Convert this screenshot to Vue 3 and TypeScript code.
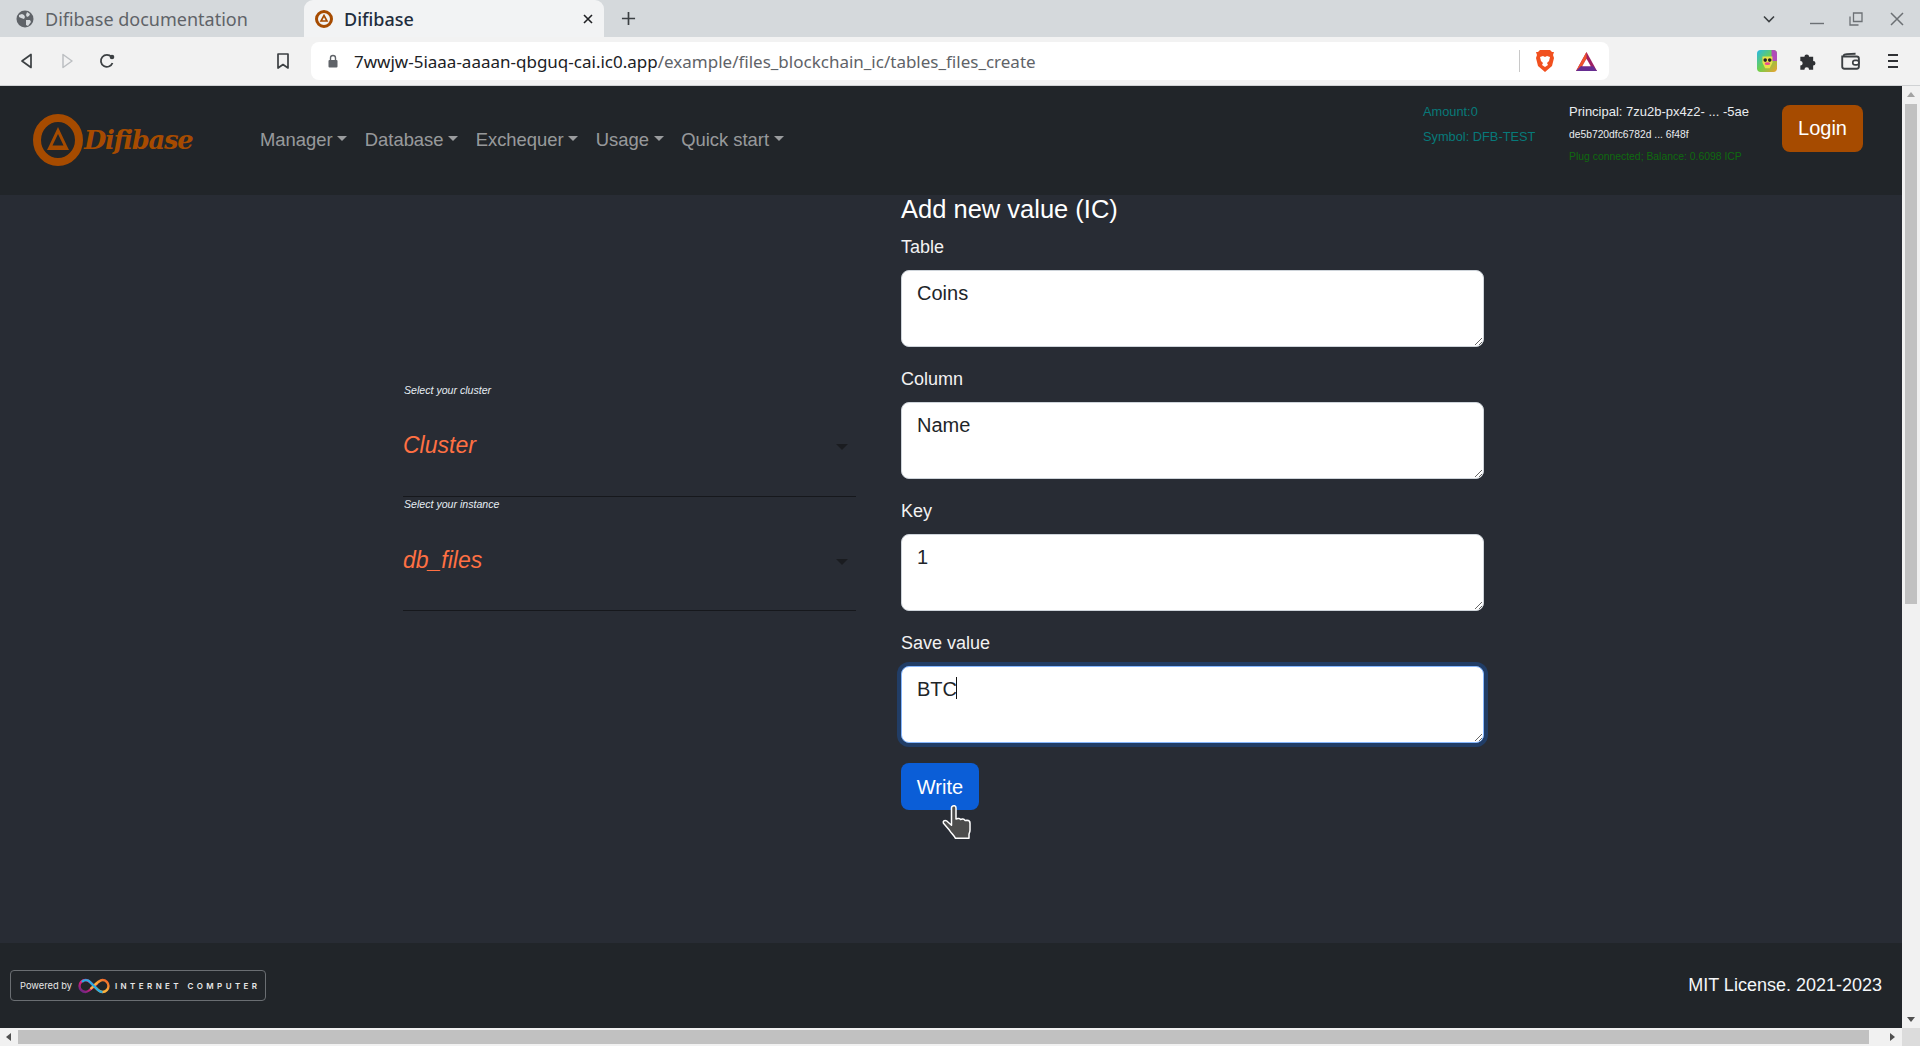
<script setup lang="ts">
const navItems: string[] = ['Manager', 'Database', 'Exchequer', 'Usage', 'Quick start']
const fields = [
  { label: 'Table', value: 'Coins', focus: false },
  { label: 'Column', value: 'Name', focus: false },
  { label: 'Key', value: '1', focus: false },
  { label: 'Save value', value: 'BTC', focus: true },
]
const selects = [
  { label: 'Select your cluster', value: 'Cluster' },
  { label: 'Select your instance', value: 'db_files' },
]
</script>

<template>
  <div class="browser">
    <div class="tabstrip">
      <div class="tab">
        <svg class="favicon" viewBox="0 0 18 18"><circle cx="9" cy="9" r="8.5" fill="#5f6368"/><path d="M3 5l3-1 2 1 1 2-1 2-3-1-2-1zM11 2l3 2-1 2-2 1-1-2zM10 10l4 0 1 2-3 4-2-1z" fill="#d5d9dc"/></svg>
        <span class="tab-title">Difibase documentation</span>
      </div>
      <div class="tab tab-active">
        <svg class="favicon" viewBox="0 0 18 18"><circle cx="9" cy="9" r="7.500" fill="none" stroke="#a64b00" stroke-width="3"/><path d="M9 5.500l3 5.500H6z" fill="none" stroke="#a64b00" stroke-width="1.600"/></svg>
        <span class="tab-title">Difibase</span>
        <svg class="tab-x" viewBox="0 0 12 12"><path d="M2 2l8 8M10 2l-8 8" stroke="#202124" stroke-width="1.600"/></svg>
      </div>
      <svg class="plus" viewBox="0 0 16 16"><path d="M8 1v14M1 8h14" stroke="#3c4043" stroke-width="1.800"/></svg>
      <div class="win-controls">
        <svg class="wc wc-chev" viewBox="0 0 14 14"><path d="M2 4.500l5 5 5-5" fill="none" stroke="#3c4043" stroke-width="1.600"/></svg>
        <svg class="wc wc-min" viewBox="0 0 14 14"><path d="M0 11.500h14" stroke="#6c7074" stroke-width="1.400"/></svg>
        <svg class="wc wc-max" viewBox="0 0 14 14"><path d="M4.500 1h8.500v8.500H4.500zM1 4.500v8.500h8.500" fill="none" stroke="#6c7074" stroke-width="1.300"/></svg>
        <svg class="wc wc-close" viewBox="0 0 14 14"><path d="M1 1l12 12M13 1L1 13" stroke="#6c7074" stroke-width="1.500"/></svg>
      </div>
    </div>

    <div class="toolbar">
      <div class="tool"><svg class="tool-icon" viewBox="0 0 18 18"><path d="M13 2.500v13L4 9z" fill="none" stroke="#3c4043" stroke-width="1.700" stroke-linejoin="round"/></svg></div>
      <div class="tool"><svg class="tool-icon" viewBox="0 0 18 18"><path d="M5 2.500v13L14 9z" fill="none" stroke="#bcbfc2" stroke-width="1.500" stroke-linejoin="round"/></svg></div>
      <div class="tool"><svg class="tool-icon" viewBox="0 0 18 18"><path d="M14.500 11a6 6 0 1 1-1-6" fill="none" stroke="#3c4043" stroke-width="1.800"/><circle cx="14" cy="5" r="2.300" fill="#3c4043"/></svg></div>
      <div class="tool tool-bookmark"><svg class="tool-icon" viewBox="0 0 18 18"><path d="M4 2h10v14l-5-3.500L4 16z" fill="none" stroke="#3c4043" stroke-width="1.700" stroke-linejoin="round"/></svg></div>
      <div class="address">
        <svg class="lock" viewBox="0 0 12 14"><path d="M3.500 6V4a2.500 2.500 0 0 1 5 0v2" fill="none" stroke="#5f6368" stroke-width="1.400"/><rect x="1.500" y="6" width="9" height="7.500" rx="1" fill="#5f6368"/></svg>
        <span class="url"><span class="url-host">7wwjw-5iaaa-aaaan-qbguq-cai.ic0.app</span>/example/files_blockchain_ic/tables_files_create</span>
        <span class="addr-sep"></span>
        <svg class="brave" viewBox="0 0 20 24"><path d="M5 1h10l2 2 2 0-1 3 1 3-2 8-7 6-7-6-2-8 1-3-1-3 2 0z" fill="#f1501f"/><path d="M5 8l3-1 2 1 2-1 3 1-1 4-2 2 1 2-3 2-3-2 1-2-2-2z" fill="#fff"/></svg>
        <svg class="bat" viewBox="0 0 24 22"><path d="M12 1L23 21H1z" fill="#9e1f63"/><path d="M1 21L12 1v7L8 15z" fill="#f0532b"/><path d="M1 21h22l-4-5H6z" fill="#662d91"/><path d="M12 8l4.500 8h-9z" fill="#fff"/></svg>
      </div>
      <div class="tool tool-ext">
        <svg class="ext" viewBox="0 0 22 24">
          <defs><linearGradient id="rb" x1="0" y1="0" x2="1" y2="1"><stop offset="0" stop-color="#27b8e8"/><stop offset=".5" stop-color="#6fd04a"/><stop offset="1" stop-color="#f0a030"/></linearGradient></defs>
          <rect width="22" height="24" rx="4" fill="url(#rb)"/><path d="M16 0h2a4 4 0 0 1 4 4v8h-6z" fill="#b04ab8"/><path d="M6 7h11v7l-3 6H9l-3-6z" fill="#e8e24a"/><circle cx="9" cy="11" r="2" fill="#222"/><circle cx="14" cy="11" r="2" fill="#222"/><ellipse cx="11.500" cy="15" rx="3" ry="1.500" fill="#e84a90"/>
        </svg>
      </div>
      <div class="tool tool-r"><svg class="tool-icon tool-puzzle" viewBox="0 0 18 18"><path d="M2 5h3.500a2 2 0 1 1 4 0H13v3.500a2 2 0 1 1 0 4V16H9.500a2 2 0 1 0-4 0H2v-3.500a2 2 0 1 0 0-4z" fill="#2f3134"/></svg></div>
      <div class="tool tool-r"><svg class="tool-icon tool-wallet" viewBox="0 0 18 18"><path d="M15 5H3.500a1.500 1.500 0 0 1 0-1.500C4 2.500 14 2.500 14 2.500M2 4v10a2 2 0 0 0 2 2h11a2 2 0 0 0 2-2V7a2 2 0 0 0-2-2" fill="none" stroke="#3c4043" stroke-width="1.700"/><rect x="11.500" y="8.500" width="5.500" height="4" rx="2" fill="#fff" stroke="#3c4043" stroke-width="1.500"/></svg></div>
      <div class="tool tool-r"><svg class="tool-icon" viewBox="0 0 18 18"><path d="M4 3h10M4 9h10M4 15h10" stroke="#2f3134" stroke-width="2"/></svg></div>
    </div>

    <div class="viewport">
      <div class="page">
        <header class="navbar">
          <div class="brand">
            <svg class="brand-mark" viewBox="0 0 50 52">
              <ellipse cx="25" cy="26" rx="21" ry="22" fill="none" stroke="#a64b00" stroke-width="8"/>
              <path d="M25 13l9 19 2 4H14l2-4z" fill="#a64b00"/>
              <path d="M25 20l5.500 11.500h-11z" fill="#212529"/>
            </svg>
            <span class="brand-name">Difibase</span>
          </div>
          <nav class="nav">
            <a v-for="item in navItems" :key="item" class="nav-link">{{ item }}</a>
          </nav>
          <div class="wallet">
            <div class="w-line">Amount:0</div>
            <div class="w-line">Symbol: DFB-TEST</div>
          </div>
          <div class="principal">
            <div class="p-main">Principal: 7zu2b-px4z2- ... -5ae</div>
            <div class="p-hash">de5b720dfc6782d ... 6f48f</div>
            <div class="p-plug">Plug connected; Balance: 0.6098 ICP</div>
          </div>
          <button class="btn btn-login" type="button">Login</button>
        </header>

        <main class="main">
          <section class="selectors">
            <div v-for="s in selects" :key="s.label" class="sel-group">
              <div class="sel-label">{{ s.label }}</div>
              <div class="sel-box">
                <span class="sel-value">{{ s.value }}</span>
                <span class="sel-arrow"></span>
              </div>
            </div>
          </section>
          <section class="form">
            <h3 class="title">Add new value (IC)</h3>
            <div v-for="f in fields" :key="f.label" class="field">
              <label class="field-label">{{ f.label }}</label>
              <div class="ta-wrap">
                <textarea class="ta" :class="{ 'ta-focus': f.focus }" :value="f.value"></textarea>
                <span v-if="f.focus" class="caret"></span>
              </div>
            </div>
            <div class="btn-wrap">
              <button class="btn btn-write" type="button">Write</button>
              <svg class="hand" viewBox="0 0 32 36">
                <path d="M11 2.500c1.500-1.500 4-1 4 1.500v11l2-.5c2-.3 2 .5 2.500 1l2-.5c1.500-.2 2 .5 2.500 1.500l2-.2c2 0 3 1.500 3 3v7c0 2-1 3-1 4v4H14.500c-1-2-4-5-6-8l-6-7c-1-2 1-3.500 3-2.500l5 4.500V4c0-.5.200-1 .500-1.500z" fill="#4d4d4d" stroke="#fff" stroke-width="1.500" stroke-linejoin="round"/>
              </svg>
            </div>
          </section>
        </main>

        <footer class="footer">
          <div class="ic-badge">
            <span class="ic-powered">Powered by</span>
            <svg class="ic-logo" viewBox="0 0 32 16">
              <defs>
                <linearGradient id="icL" x1="0" y1="1" x2="1" y2="0"><stop offset="0" stop-color="#522785"/><stop offset=".5" stop-color="#ed1e79"/><stop offset="1" stop-color="#ed1e79"/></linearGradient>
                <linearGradient id="icR" x1="1" y1="0" x2="0" y2="1"><stop offset="0" stop-color="#f15a24"/><stop offset=".5" stop-color="#fbb03b"/><stop offset="1" stop-color="#fbb03b"/></linearGradient>
              </defs>
              <path d="M16 8C13 5 11 2 7.500 2 4 2 1.500 5 1.500 8S4 14 7.500 14c3.500 0 9-6 12-9" fill="none" stroke="url(#icL)" stroke-width="2.400"/>
              <path d="M16 8c3 3 5 6 8.500 6S30.500 11 30.500 8 28 2 24.500 2c-3.500 0-9 6-12 9" fill="none" stroke="url(#icR)" stroke-width="2.400"/>
              <path d="M4 4C6 1.500 10 1.500 12 4l8 8c1.500 1.500 3 2 4.500 2" fill="none" stroke="#29abe2" stroke-width="2.400"/>
            </svg>
            <span class="ic-name">INTERNET COMPUTER</span>
          </div>
          <div class="license">MIT License. 2021-2023</div>
        </footer>
      </div>
      <div class="vscroll">
        <span class="arrow-up"></span>
        <div class="vthumb"></div>
        <span class="arrow-down"></span>
      </div>
    </div>

    <div class="hscroll">
      <span class="arrow-left"></span>
      <div class="hthumb"></div>
      <span class="arrow-right"></span>
      <div class="corner"></div>
    </div>
  </div>
</template>

<style>
html, body { margin: 0; padding: 0; overflow: hidden; }
</style>

<style scoped>
.browser {
  width: 1920px;
  height: 1046px;
  display: flex;
  flex-direction: column;
  overflow: hidden;
  font-family: "Liberation Sans", Arial, sans-serif;
  background: #282c34;
}
.tabstrip {
  height: 37px;
  flex: none;
  display: flex;
  align-items: center;
  background: #d5d9dc;
}
.tab {
  width: 304px;
  height: 37px;
  box-sizing: border-box;
  display: flex;
  align-items: center;
  padding-left: 16px;
  font-family: "Noto Sans", sans-serif;
  font-size: 18px;
  color: #5f6368;
}
.tab-active {
  width: 300px;
  padding-left: 11px;
  background: #f2f3f4;
  border-radius: 9px 9px 0 0;
  color: #1f2d3d;
  position: relative;
  font-weight: 500;
}
.favicon { width: 18px; height: 18px; margin-right: 11px; flex: none; }
.tab-title { white-space: nowrap; }
.tab-x { width: 12px; height: 12px; margin-left: auto; margin-right: 10px; }
.plus { width: 15px; height: 15px; margin-left: 17px; }
.win-controls { margin-left: auto; display: flex; align-items: center; height: 37px; }
.wc { width: 14px; height: 14px; flex: none; }
.wc-chev { margin-right: 34px; }
.wc-min { margin-right: 25px; }
.wc-max { margin-right: 27px; }
.wc-close { margin-right: 16px; }

.toolbar {
  height: 49px;
  flex: none;
  box-sizing: border-box;
  display: flex;
  align-items: center;
  padding-left: 7px;
  background: #f2f2f2;
  border-bottom: 1px solid #d0d2d4;
}
.tool { width: 40px; height: 40px; display: flex; align-items: center; justify-content: center; flex: none; }
.tool-icon { width: 18px; height: 18px; }
.tool-puzzle { width: 21px; height: 21px; margin-right: 1px; }
.tool-wallet { width: 20px; height: 20px; margin-right: 2px; }
.tool-bookmark { margin-left: 136px; margin-right: 8px; }
.tool-ext { margin-left: 137px; width: 42px; }
.tool-r { width: 42px; }
.ext { width: 20px; height: 22px; }
.address {
  width: 1298px;
  height: 38px;
  flex: none;
  box-sizing: border-box;
  display: flex;
  align-items: center;
  padding: 0 11px 0 16px;
  background: #fff;
  border-radius: 8px;
}
.lock { width: 12px; height: 14px; margin-right: 15px; flex: none; }
.url { font-family: "Noto Sans", sans-serif; font-size: 17px; color: #5f6368; white-space: nowrap; }
.url-host { color: #202124; }
.addr-sep { width: 1px; height: 22px; background: #c8c8c8; margin-left: auto; margin-right: 15px; }
.brave { width: 20px; height: 24px; margin-right: 20px; flex: none; }
.bat { width: 23px; height: 21px; flex: none; }

.viewport { flex: 1; min-height: 0; display: flex; }
.page { flex: 1; min-width: 0; display: flex; flex-direction: column; }

.navbar {
  height: 109px;
  flex: none;
  box-sizing: border-box;
  display: flex;
  align-items: center;
  padding: 0 39px 1px 33px;
  background: #212529;
}
.brand { display: flex; align-items: center; width: 219px; flex: none; }
.brand-mark { width: 50px; height: 52px; flex: none; }
.brand-name {
  font-family: "DejaVu Serif", serif;
  font-weight: 700;
  font-style: italic;
  font-size: 25.800px;
  letter-spacing: -1.300px;
  color: #a64b00;
  margin-left: 1px;
}
.nav { display: flex; align-items: center; gap: 1.500px; }
.nav-link {
  padding: 8px;
  font-size: 18.400px;
  line-height: 24px;
  color: rgba(255, 255, 255, 0.55);
}
.nav-link::after {
  content: "";
  display: inline-block;
  margin-left: 4.700px;
  vertical-align: 5px;
  border-top: 5.500px solid;
  border-left: 5.500px solid transparent;
  border-right: 5.500px solid transparent;
}
.wallet {
  margin-left: auto;
  width: 146px;
  flex: none;
  align-self: flex-start;
  margin-top: 17px;
  font-size: 12.800px;
  color: #077a7a;
}
.w-line { height: 25px; line-height: 18px; white-space: nowrap; }
.principal {
  width: 213px;
  flex: none;
  align-self: flex-start;
  margin-top: 17px;
  color: #e9ecef;
  white-space: nowrap;
}
.p-main { font-size: 13px; line-height: 18px; }
.p-hash { font-size: 10.300px; line-height: 18px; margin-top: 5px; }
.p-plug { font-size: 10.400px; line-height: 18px; margin-top: 4px; color: #0f6a0f; }
.btn {
  border: none;
  border-radius: 8px;
  color: #fff;
  font-family: "Liberation Sans", Arial, sans-serif;
  font-size: 20px;
  line-height: 30px;
  padding: 8px 16px;
  height: 47px;
  box-sizing: border-box;
}
.btn-login { background: #a64b00; align-self: flex-start; margin-top: 19px; width: 81px; padding: 6px 0 8px; }

.main { flex: 1; min-height: 0; display: flex; padding-left: 403px; background: #282c34; }
.selectors { width: 453px; margin-right: 45px; padding-top: 188px; flex: none; }
.sel-group { color: #fff; }
.sel-label { font-size: 10.600px; font-style: italic; line-height: 14px; color: #e6edf3; padding-left: 1px; }
.sel-box {
  height: 100px;
  box-sizing: border-box;
  display: flex;
  align-items: flex-start;
  justify-content: space-between;
  padding: 32px 8px 0 0;
  border-bottom: 1px solid #16181c;
}
.sel-group + .sel-group .sel-box { padding-top: 33px; }
.sel-value { font-size: 23px; line-height: 32px; font-style: italic; color: #ff7043; }
.sel-arrow {
  margin-top: 15px;
  border-top: 6px solid #1a1c20;
  border-left: 6px solid transparent;
  border-right: 6px solid transparent;
}
.form { width: 583px; flex: none; color: #fff; }
.title { margin: 0 0 11px; font-size: 25.500px; line-height: 29px; font-weight: 400; }
.field { margin-bottom: 20px; }
.field-label { display: block; font-size: 18px; line-height: 24px; margin-bottom: 11px; color: #f2f2f2; }
.ta-wrap { position: relative; height: 77px; }
.ta {
  display: block;
  width: 583px;
  height: 77px;
  box-sizing: border-box;
  padding: 7px 15px;
  font-family: "Liberation Sans", Arial, sans-serif;
  font-size: 20px;
  line-height: 30px;
  color: #212529;
  background: #fff;
  border: 1px solid #ced4da;
  border-radius: 8px;
  outline: none;
  resize: vertical;
}
.ta-focus { border-color: #86b7fe; box-shadow: 0 0 0 4px rgba(13, 110, 253, 0.25); }
.caret { position: absolute; left: 55px; top: 11px; width: 1px; height: 22px; background: #111; }
.btn-wrap { position: relative; margin-top: 2px; height: 47px; }
.btn-write { background: #0b5ed7; width: 78px; padding: 8px 0; }
.hand { position: absolute; left: 40px; top: 41px; width: 32px; height: 36px; }

.footer {
  height: 85px;
  flex: none;
  box-sizing: border-box;
  display: flex;
  align-items: center;
  justify-content: space-between;
  padding: 0 20px 0 10px;
  background: #212529;
}
.ic-badge {
  width: 256px;
  height: 31px;
  box-sizing: border-box;
  display: flex;
  align-items: center;
  padding-left: 9px;
  border: 1px solid #6a6e72;
  border-radius: 4px;
  color: #e8e8e8;
}
.ic-powered { font-family: "Inter", sans-serif; font-size: 9.300px; width: 58px; white-space: nowrap; }
.ic-logo { width: 32px; height: 16px; margin-right: 5px; flex: none; }
.ic-name { font-family: "Inter", sans-serif; font-size: 8px; font-weight: 600; letter-spacing: 3.400px; white-space: nowrap; }
.license { font-size: 18px; color: #f4f6f8; }

.vscroll { width: 18px; flex: none; position: relative; background: #f1f1f1; box-sizing: border-box; padding: 18px 3px 18px 3px; }
.vthumb { height: 500px; background: #c1c1c1; }
.arrow-up { position: absolute; left: 5px; top: 6px; border-bottom: 5px solid #a3a3a3; border-left: 4px solid transparent; border-right: 4px solid transparent; }
.arrow-down { position: absolute; left: 5px; bottom: 6px; border-top: 5px solid #505050; border-left: 4px solid transparent; border-right: 4px solid transparent; }
.hscroll { height: 18px; flex: none; position: relative; display: flex; background: #f1f1f1; box-sizing: border-box; padding: 2px 0 2px 18px; }
.hthumb { width: 1851px; height: 14px; background: #c1c1c1; }
.arrow-left { position: absolute; left: 6px; top: 5px; border-right: 5px solid #505050; border-top: 4px solid transparent; border-bottom: 4px solid transparent; }
.arrow-right { position: absolute; right: 25px; top: 5px; border-left: 5px solid #505050; border-top: 4px solid transparent; border-bottom: 4px solid transparent; }
.corner { position: absolute; right: 0; top: 0; width: 18px; height: 18px; background: #dcdcdc; }
</style>
